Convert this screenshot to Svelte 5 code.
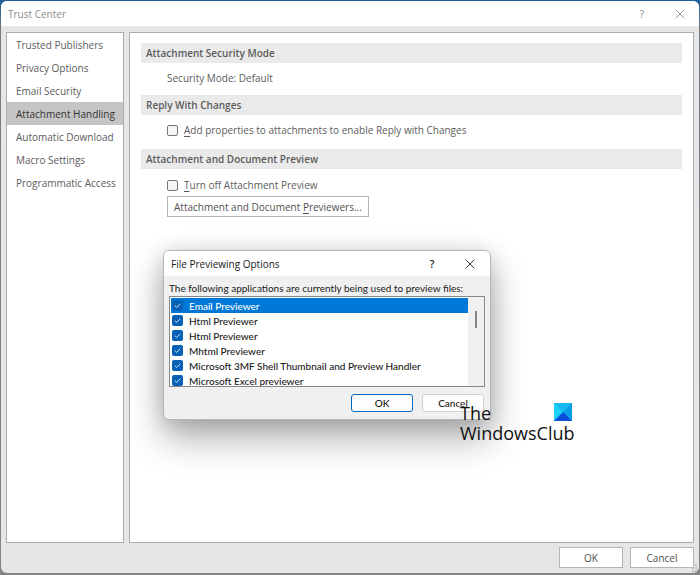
<script>
  const pages = [
    'Trusted Publishers',
    'Privacy Options',
    'Email Security',
    'Attachment Handling',
    'Automatic Download',
    'Macro Settings',
    'Programmatic Access',
  ];
  let current = $state('Attachment Handling');
  let previewers = $state([
    { name: 'Email Previewer', on: true },
    { name: 'Html Previewer', on: true },
    { name: 'Html Previewer', on: true },
    { name: 'Mhtml Previewer', on: true },
    { name: 'Microsoft 3MF Shell Thumbnail and Preview Handler', on: true },
    { name: 'Microsoft Excel previewer', on: true },
  ]);
  let selected = $state(0);
</script>

{#snippet cross()}
  <svg width="10" height="10" viewBox="0 0 10 10" aria-hidden="true">
    <path d="M0.7 0.7L9.3 9.3M9.3 0.7L0.7 9.3" fill="none" stroke="currentColor" stroke-width="0.9" />
  </svg>
{/snippet}

<div class="desktop">
  <div class="window">
    <header class="titlebar">
      <h1>Trust Center</h1>
      <button class="icon" aria-label="Help">?</button>
      <button class="icon" aria-label="Close">{@render cross()}</button>
    </header>

    <div class="body">
      <nav>
        {#each pages as page}
          <button class:active={page === current} onclick={() => (current = page)}>{page}</button>
        {/each}
      </nav>

      <main>
        <h2>Attachment Security Mode</h2>
        <p class="row">Security Mode: Default</p>
        <h2>Reply With Changes</h2>
        <label class="row check">
          <input type="checkbox" />
          <span><u>A</u>dd properties to attachments to enable Reply with Changes</span>
        </label>
        <h2>Attachment and Document Preview</h2>
        <label class="row check last">
          <input type="checkbox" />
          <span><u>T</u>urn off Attachment Preview</span>
        </label>
        <button class="flat open">Attachment and Document <u>P</u>reviewers...</button>
      </main>
    </div>

    <footer>
      <button class="flat">OK</button>
      <button class="flat">Cancel</button>
    </footer>
    <svg class="grip" width="8" height="8" viewBox="0 0 8 8" aria-hidden="true">
      <path d="M5 0h2v2h-2zM5 3h2v2h-2zM5 6h2v2h-2zM2 3h2v2h-2zM2 6h2v2h-2z" fill="#bdbdbd" />
    </svg>
  </div>

  <div class="dialog" role="dialog" aria-labelledby="dialog-title">
    <header class="dialog-bar">
      <h2 id="dialog-title">File Previewing Options</h2>
      <button class="icon help" aria-label="Help">?</button>
      <button class="icon" aria-label="Close">{@render cross()}</button>
    </header>
    <div class="dialog-body">
      <p>The following applications are currently being used to preview files:</p>
      <div class="listbox">
        <div class="items">
          {#each previewers as item, i}
            <label class:selected={i === selected}>
              <input type="checkbox" bind:checked={item.on} onchange={() => (selected = i)} />
              <svg width="11" height="11" viewBox="0 0 11 11" aria-hidden="true">
                <path d="M2.8 5.6L4.7 7.4L8.3 3.8" fill="none" stroke="#fff" stroke-width="0.8" />
              </svg>
              <span>{item.name}</span>
            </label>
          {/each}
        </div>
        <div class="track"><div class="thumb"></div></div>
      </div>
      <div class="actions">
        <button class="primary">OK</button>
        <button>Cancel</button>
      </div>
    </div>
  </div>

  <div class="watermark">
    <span>The<br />WindowsClub</span>
    <svg width="18" height="18" viewBox="0 0 18 18" aria-hidden="true">
      <rect width="18" height="18" fill="#0cb0ee" />
      <path d="M0 0H18L9 9Z" fill="#19b9f1" />
      <path d="M0 0L9 9L0 18Z" fill="#1bd0f8" />
      <path d="M18 0L9 9L18 18Z" fill="#0a9ce6" />
      <path d="M0 18L9 9L18 18Z" fill="#0b4fd8" />
    </svg>
  </div>
</div>

<style>
  :global(body) {
    margin: 0;
    background: #77797c;
  }
  .desktop {
    position: relative;
    box-sizing: border-box;
    display: flex;
    min-height: 100vh;
    padding: 1px 1px 2px;
    background: linear-gradient(#1d5f96, #777a7e 30px, #858585);
    font: 10px/14px 'Open Sans', 'Noto Sans', sans-serif;
    color: #5c5c5c;
  }
  h1,
  h2,
  p {
    margin: 0;
    font-size: inherit;
    font-weight: 400;
  }
  button {
    box-sizing: border-box;
    margin: 0;
    padding: 0;
    border: 0;
    background: none;
    font: inherit;
    color: inherit;
  }
  u {
    text-underline-offset: 2px;
  }
  .window {
    position: relative;
    flex: 1;
    display: flex;
    flex-direction: column;
    border-radius: 6px;
    overflow: hidden;
    background: #e6e6e6;
  }
  .titlebar {
    display: flex;
    align-items: center;
    height: 25px;
    padding: 0 0 0 7px;
    background: #fff;
    color: #8c8c8c;
  }
  .titlebar h1 {
    flex: 1;
  }
  .icon {
    display: grid;
    place-items: center;
    width: 38px;
    height: 24px;
  }
  .body {
    flex: 1;
    display: flex;
    gap: 5px;
    padding: 6px 5px 0;
  }
  nav,
  main {
    box-sizing: border-box;
    border: 1px solid #ababab;
    background: #fff;
  }
  nav {
    flex: none;
    width: 118px;
  }
  nav button {
    display: block;
    width: 100%;
    height: 23px;
    padding-left: 9px;
    text-align: left;
    white-space: nowrap;
  }
  nav .active {
    background: #c5c5c5;
    color: #333;
  }
  main {
    flex: 1;
    padding: 10px 11px;
  }
  main h2 {
    padding: 3px 5px;
    background: #eaeaea;
    font-weight: 600;
    color: #5c5c5c;
  }
  .row {
    padding: 8px 0 10px 26px;
  }
  .check {
    display: flex;
    align-items: center;
    gap: 6px;
    padding-bottom: 12px;
  }
  .last {
    padding: 9px 0 4px 26px;
  }
  .check input {
    appearance: none;
    box-sizing: border-box;
    width: 11px;
    height: 11px;
    margin: 0;
    border: 1px solid #767676;
    border-radius: 2px;
    background: #f5f5f5;
  }
  .flat {
    min-width: 64px;
    height: 21px;
    border: 1px solid #b4b4b4;
    background: #fff;
    color: #505050;
  }
  .open {
    margin-left: 26px;
    padding: 0 6px;
  }
  footer {
    display: flex;
    justify-content: flex-end;
    gap: 7px;
    padding: 4px 5px 5px;
  }
  .grip {
    position: absolute;
    right: 1px;
    bottom: 1px;
  }

  .dialog {
    position: absolute;
    left: 163px;
    top: 250px;
    box-sizing: border-box;
    width: 328px;
    border: 1px solid #b5b5b5;
    border-radius: 6px;
    overflow: hidden;
    background: #f0f0f0;
    color: #1a1a1a;
    box-shadow:
      0 18px 36px rgb(0 0 0 / 32%),
      0 2px 20px rgb(0 0 0 / 14%);
  }
  .dialog-bar {
    display: flex;
    align-items: center;
    height: 25px;
    padding: 0 1px 0 7px;
    background: #fff;
  }
  .dialog-bar h2 {
    flex: 1;
  }
  .help {
    font-weight: 600;
  }
  .dialog-body {
    padding: 5px 5px 7px;
    font-family: Lato, 'Open Sans', sans-serif;
    font-weight: 500;
  }
  .dialog-body p {
    white-space: nowrap;
  }
  .listbox {
    display: flex;
    height: 89px;
    margin-top: 1px;
    border: 1px solid #828790;
    background: #fff;
  }
  .items {
    flex: 1;
    padding: 1px 0 0 1px;
    overflow: hidden;
  }
  .items label {
    position: relative;
    display: flex;
    align-items: center;
    gap: 6px;
    height: 15px;
    padding-left: 1px;
  }
  .items .selected {
    background: #0078d7;
    color: #fff;
  }
  .items input {
    appearance: none;
    width: 11px;
    height: 11px;
    margin: 0;
    border-radius: 2px;
    background: #fff;
    box-shadow: inset 0 0 0 1px #767676;
  }
  .items input:checked {
    background: #0560b6;
    box-shadow: none;
  }
  .items svg {
    position: absolute;
    left: 1px;
    pointer-events: none;
  }
  .track {
    display: flex;
    justify-content: center;
    width: 16px;
    padding-top: 14px;
    background: #f0f0f0;
  }
  .thumb {
    width: 2px;
    height: 17px;
    background: #858585;
  }
  .actions {
    display: flex;
    justify-content: flex-end;
    gap: 9px;
    padding: 7px 1px 0 0;
  }
  .actions button {
    width: 62px;
    height: 18px;
    border: 1px solid #d0d0d0;
    border-radius: 3px;
    background: #fdfdfd;
  }
  .actions .primary {
    border-color: #0067c0;
  }

  .watermark {
    position: absolute;
    left: 460px;
    top: 403px;
    font: 18px/20px 'Open Sans', 'Noto Sans', sans-serif;
    color: #111;
  }
  .watermark svg {
    position: absolute;
    right: 3px;
    top: 0;
  }
</style>
